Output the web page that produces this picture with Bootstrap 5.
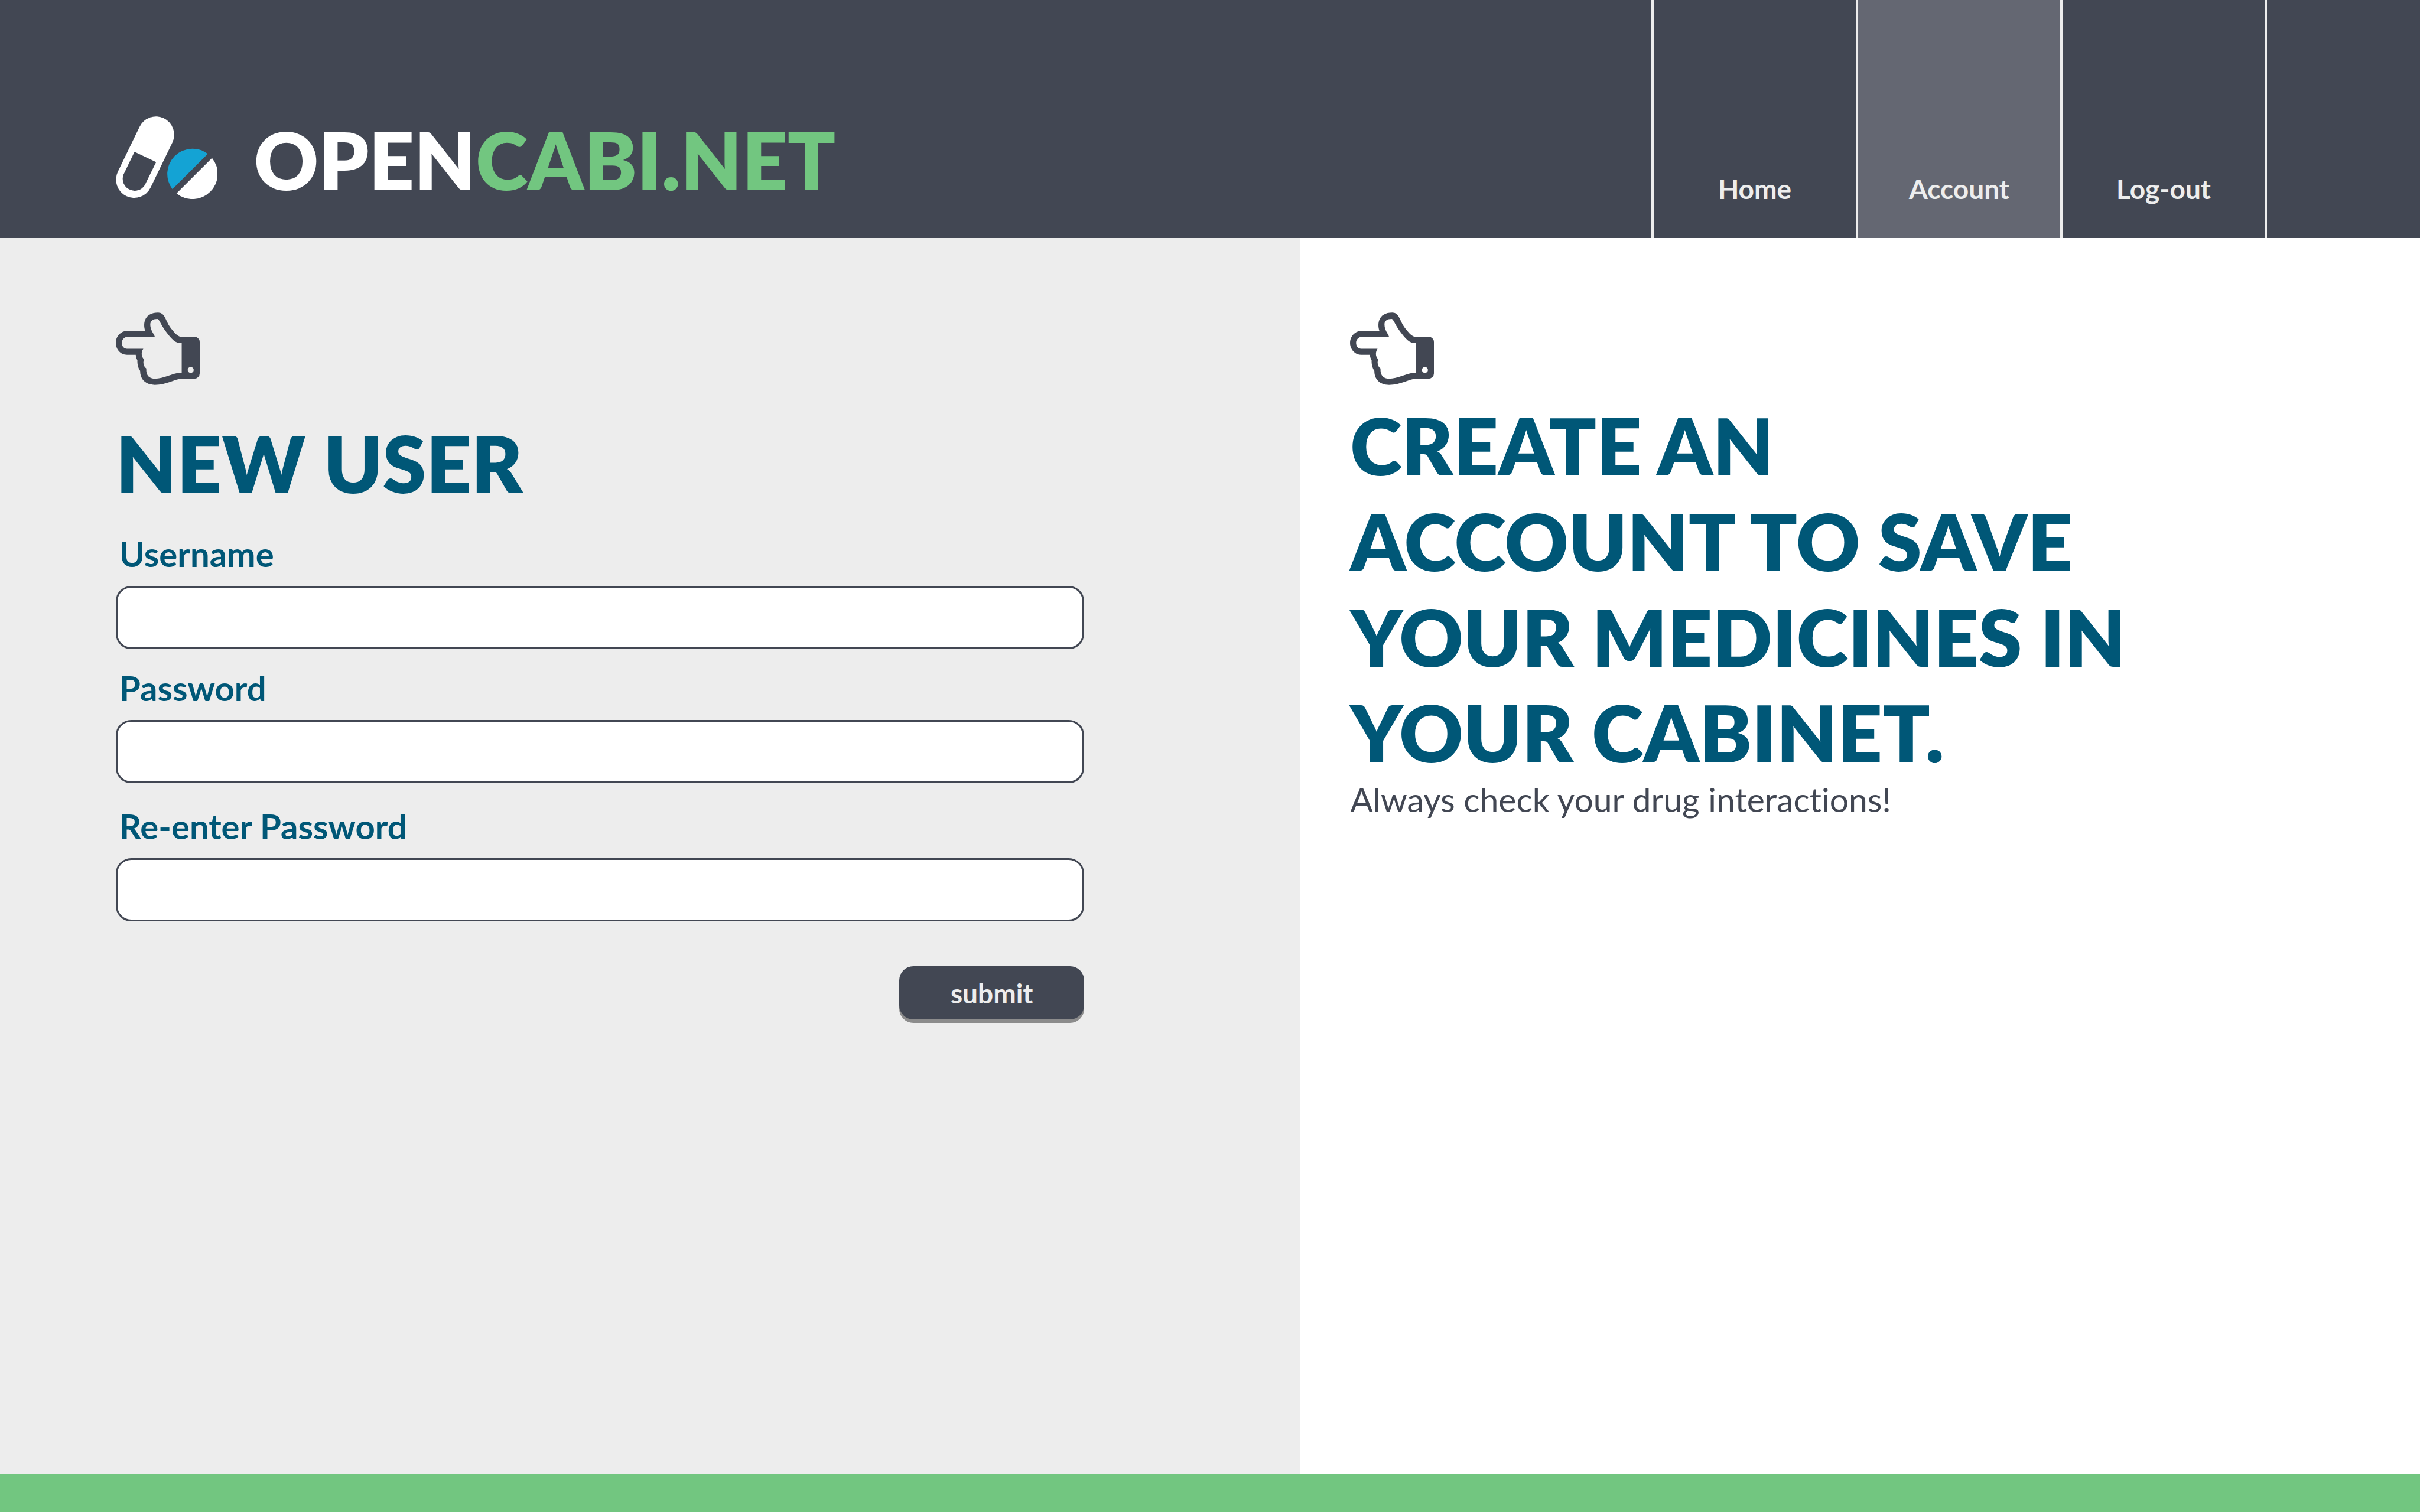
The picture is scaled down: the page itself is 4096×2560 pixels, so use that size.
<!DOCTYPE html>
<html lang="en">
<head>
<meta charset="utf-8">
<meta name="viewport" content="width=device-width, initial-scale=1">
<title>OpenCabi.net – New user</title>
<link href="https://cdn.jsdelivr.net/npm/bootstrap@5.3.0/dist/css/bootstrap.min.css" rel="stylesheet">
<style>
  :root { --slate: #424753; --slate-light: #646772; --mist: #ededed; --leaf: #72c680; --teal: #005777; --sky: #14a3d4; }
  body { font-family: Lato, "Open Sans", sans-serif; font-variant-ligatures: none; color: var(--slate); }
  .site-header { background: var(--slate); min-height: 403px; padding: 0 259px 0 196px; }
  .brand { gap: 62px; padding-bottom: 52px; font-size: 134px; line-height: 160px; font-weight: 800; color: #fff; }
  .brand svg { width: 172px; height: 140px; margin-bottom: 14px; }
  .brand-accent { color: var(--leaf); }
  .site-nav { border-right: 4px solid var(--mist); }
  .site-nav .nav-link { width: 346px; padding: 0 0 55px; border-left: 4px solid var(--mist); color: var(--mist); font-size: 46px; line-height: 56px; font-weight: 700; }
  .site-nav .nav-link.active { background: var(--slate-light); }
  .form-panel { width: 53.74%; background: var(--mist); padding: 126px 366px 126px 196px; }
  .info-panel { background: #fff; padding: 126px 84px; }
  .hand { width: 142px; height: 123px; fill: var(--slate); }
  .headline { font-size: 133px; line-height: 162px; font-weight: 800; color: var(--teal); }
  .form-panel .headline { margin: 51px 0 38px; }
  .info-panel .headline { margin: 21px 0 0; }
  .tagline { font-size: 57px; line-height: 64px; }
  .field-label { font-size: 58px; line-height: 70px; font-weight: 700; color: var(--teal); margin: 0 0 19px 6px; }
  .field-box { height: 107px; border: 3px solid var(--slate); border-radius: 26px; padding: 0 30px; font-size: 58px; background: #fff; }
  .field-gap { margin-bottom: 31px; }
  .field-gap-lg { margin-bottom: 38px; }
  .btn-submit { width: 313px; height: 90px; margin-top: 76px; padding: 2px 0 0; border: 0; border-radius: 24px; background: var(--slate); box-shadow: 0 6px 0 #8c8c8c; color: var(--mist); font-size: 46px; line-height: 56px; font-weight: 700; }
  .btn-submit:hover { background: var(--slate-light); color: #fff; }
  .site-footer { background: var(--leaf); height: 65px; }
</style>
</head>
<body>
<div class="d-flex flex-column min-vh-100">
  <header class="site-header d-flex justify-content-between align-items-stretch">
    <a href="#" class="brand d-flex align-items-end text-decoration-none">
      <svg viewBox="75 81 673 547" aria-hidden="true">
        <path d="M197 500 341 202" fill="none" stroke="#fff" stroke-width="241" stroke-linecap="round"/>
        <path d="M199 315 342 384 268 534A79 79 0 0 1 126 466Z" fill="#424753"/>
        <path d="M684 329A167 167 0 0 0 450 563Z" fill="#14a3d4"/>
        <path d="M712 356A167 167 0 0 1 477 591Z" fill="#fff"/>
      </svg>
      <span>OPEN<span class="brand-accent">CABI.NET</span></span>
    </a>
    <nav class="site-nav nav flex-nowrap align-items-stretch">
      <a href="#" class="nav-link d-flex align-items-end justify-content-center">Home</a>
      <a href="#" class="nav-link active d-flex align-items-end justify-content-center" aria-current="page">Account</a>
      <a href="#" class="nav-link d-flex align-items-end justify-content-center">Log-out</a>
    </nav>
  </header>

  <svg class="d-none" aria-hidden="true">
    <symbol id="hand" viewBox="78 87 555 478">
      <path fill-rule="evenodd" d="M158 207H272C262 178 266 152 270 140 282 105 312 87 358 87 378 88 388 96 398 110 412 132 420 160 438 184 460 213 485 243 505 246H598A35 35 0 0 1 633 281V489A35 35 0 0 1 598 524H514C470 526 410 565 336 565 275 564 238 527 239 472 228 457 219 430 221 402 214 392 210 378 210 366H152C110 366 78 330 78 287 78 243 113 207 158 207ZM158 247H336C331 227 306 205 306 165 306 140 325 129 352 129 364 128 372 160 402 202 430 240 465 287 497 287H514V485H505C450 487 395 524 336 524 298 524 276 500 280 457 262 446 255 418 265 395 246 380 244 350 260 326H152C132 326 118 310 118 287 118 265 136 247 158 247ZM573.500 446A20 20 0 1 0 573.500 486 20 20 0 1 0 573.500 446Z"/>
    </symbol>
  </svg>

  <main class="d-flex flex-grow-1">
    <section class="form-panel">
      <svg class="hand d-block" aria-hidden="true"><use href="#hand"/></svg>
      <h1 class="headline">NEW USER</h1>
      <form>
        <div class="field-gap">
          <label class="field-label d-block" for="username">Username</label>
          <input class="field-box form-control" type="text" id="username" autocomplete="username">
        </div>
        <div class="field-gap-lg">
          <label class="field-label d-block" for="password">Password</label>
          <input class="field-box form-control" type="password" id="password" autocomplete="new-password">
        </div>
        <div>
          <label class="field-label d-block" for="password2">Re-enter Password</label>
          <input class="field-box form-control" type="password" id="password2" autocomplete="new-password">
        </div>
        <button class="btn btn-submit d-block ms-auto" type="submit">submit</button>
      </form>
    </section>
    <section class="info-panel flex-grow-1">
      <svg class="hand d-block" aria-hidden="true"><use href="#hand"/></svg>
      <h2 class="headline">CREATE AN<br>ACCOUNT TO SAVE<br>YOUR MEDICINES IN<br>YOUR CABINET.</h2>
      <p class="tagline mb-0">Always check your drug interactions!</p>
    </section>
  </main>

  <footer class="site-footer"></footer>
</div>
<script src="https://cdn.jsdelivr.net/npm/bootstrap@5.3.0/dist/js/bootstrap.bundle.min.js"></script>
</body>
</html>
